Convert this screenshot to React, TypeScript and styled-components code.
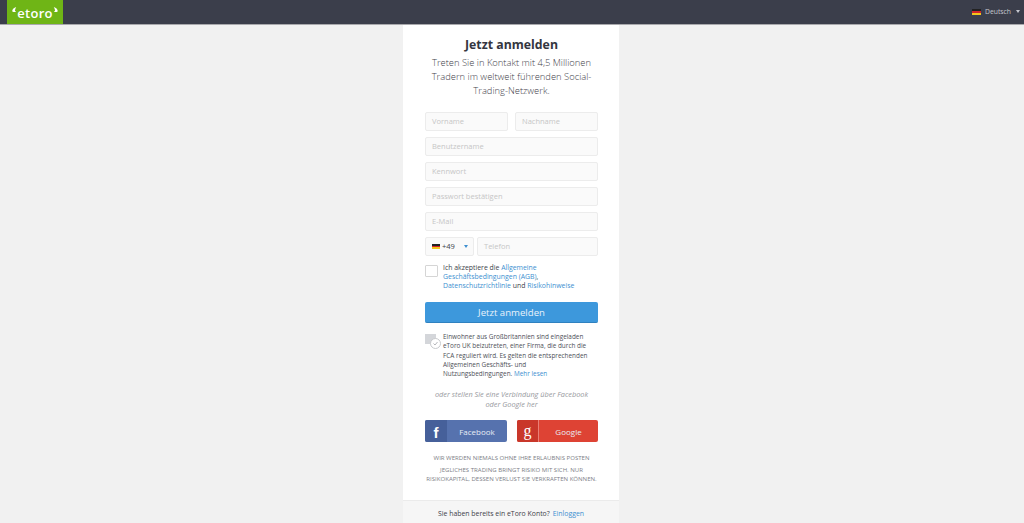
import React from 'react';
import styled, { createGlobalStyle } from 'styled-components';

const GlobalStyle = createGlobalStyle`
  html, body {
    margin: 0;
    padding: 0;
    height: 523px;
    overflow: hidden;
    background: #f1f1f1;
    font-family: "Open Sans", "Liberation Sans", sans-serif;
  }
  * { box-sizing: border-box; }
`;

const Header = styled.header`
  height: 25px;
  background: #3b3e4b;
  border-bottom: 1px solid #a9a9ad;
  display: flex;
  justify-content: space-between;
  align-items: stretch;
  padding: 0 4px 0 7px;
`;

const Logo = styled.div`
  width: 56px;
  background: #6fb516;
  display: flex;
  align-items: flex-start;
  justify-content: center;
  padding-top: 6px;
  color: #fff;
`;

const LogoWord = styled.span`
  font-size: 13px;
  font-weight: 600;
  line-height: 14px;
  letter-spacing: 0.3px;
  text-transform: lowercase;
`;

const Lang = styled.div`
  display: flex;
  align-items: center;
  gap: 4px;
  color: #c5c7cf;
  font-size: 6.8px;
  padding-bottom: 1px;
`;

const Flag = styled.span<{ $w: number }>`
  display: inline-block;
  width: ${({ $w }) => $w}px;
  height: ${({ $w }) => Math.round($w * 0.62)}px;
  background: linear-gradient(#222 0 33%, #d3252a 33% 66%, #f2c51c 66%);
`;

const Caret = styled.span<{ $gap: number; $color: string }>`
  width: 0;
  height: 0;
  margin-left: ${({ $gap }) => $gap}px;
  border-left: 2.5px solid transparent;
  border-right: 2.5px solid transparent;
  border-top: 3px solid ${({ $color }) => $color};
`;

const Page = styled.div`
  display: flex;
  justify-content: center;
  padding-right: 2px;
`;

const Card = styled.main`
  width: 216px;
  height: 498px;
  background: #fff;
  display: flex;
  flex-direction: column;
  overflow: hidden;
`;

const Body = styled.div`
  flex: 1;
  padding: 9px 21px 0 22px;
  display: flex;
  flex-direction: column;
`;

const Title = styled.h1`
  margin: 0 -10px;
  font-size: 12.3px;
  line-height: 21px;
  font-weight: 700;
  color: #34363f;
  text-align: center;
`;

const Lead = styled.p`
  margin: 1px -6px 0;
  font-size: 9.4px;
  line-height: 14px;
  font-weight: 300;
  color: #3f424b;
  text-align: center;
`;

const Fields = styled.div`
  margin-top: 14px;
  display: flex;
  flex-direction: column;
  gap: 6px;
`;

const Row = styled.div<{ $gap: number }>`
  display: flex;
  gap: ${({ $gap }) => $gap}px;
`;

const Field = styled.div`
  flex: 1 0 19px;
  min-height: 19px;
  background: #fafafa;
  border: 1px solid #ececec;
  border-radius: 2px;
  padding: 0 6px 1px;
  display: flex;
  align-items: center;
  font-size: 7.5px;
  color: #c6c6c6;
`;

const DialCode = styled.div`
  width: 49px;
  flex: none;
  height: 19px;
  background: #fafafa;
  border: 1px solid #ececec;
  border-radius: 2px;
  padding: 0 5px 1px 6px;
  display: flex;
  align-items: center;
  gap: 2px;
  font-size: 7.5px;
  color: #40424b;
`;

const Terms = styled.div`
  margin-top: 7px;
  display: flex;
  gap: 5px;
  font-size: 6.9px;
  line-height: 9px;
  color: #40424b;
`;

const Check = styled.span`
  flex: none;
  width: 13px;
  height: 12px;
  margin-top: 2px;
  background: #fff;
  border: 1px solid #d5d5d5;
  border-radius: 1px;
`;

const Link = styled.a`
  color: #3c8fd0;
`;

const Submit = styled.button`
  margin-top: 12px;
  height: 21px;
  width: 100%;
  flex: none;
  border: 0;
  border-bottom: 1px solid #2f81bf;
  border-radius: 2px;
  background: #3d98dc;
  color: #e9f3fb;
  font: 400 9.6px "Open Sans", sans-serif;
  padding: 0;
`;

const Notice = styled.div`
  margin-top: 9px;
  padding-right: 5px;
  display: flex;
  gap: 2px;
  font-size: 6.4px;
  line-height: 9.3px;
  color: #4d4f57;
`;

const NoticeIcon = styled.svg`
  flex: none;
  width: 16px;
  height: 16px;
  margin-top: 2px;
`;

const Alt = styled.p`
  margin: 11px 0 0;
  font-size: 7.35px;
  line-height: 10px;
  font-style: italic;
  color: #97999e;
  text-align: center;
`;

const Socials = styled.div`
  margin-top: 11px;
  display: flex;
  justify-content: space-between;
`;

const Social = styled.div<{ $bg: string; $w: number }>`
  width: ${({ $w }) => $w}px;
  height: 22px;
  border-radius: 2px;
  background: ${({ $bg }) => $bg};
  color: #e8edf5;
  font-size: 8px;
  display: flex;
  align-items: center;
  overflow: hidden;

  & > span {
    flex: 1;
    text-align: center;
  }
`;

const FacebookMark = styled.b`
  width: 22px;
  align-self: stretch;
  background: #46609a;
  color: #fff;
  font: 700 15px "Liberation Sans", sans-serif;
  display: flex;
  align-items: center;
  justify-content: center;
  padding-top: 2px;
`;

const GoogleMark = styled.b`
  width: 22px;
  align-self: stretch;
  background: #c9372a;
  border-right: 1px solid #ea8076;
  color: #fff;
  font: 400 16px "Liberation Serif", serif;
  display: flex;
  align-items: center;
  justify-content: center;
`;

const Legal = styled.p<{ $top: number }>`
  margin: ${({ $top }) => $top}px -2px 0;
  font-size: 6.05px;
  line-height: 9px;
  color: #7e8087;
  text-align: center;
  text-transform: uppercase;
`;

const Foot = styled.footer`
  height: 23px;
  flex: none;
  padding-top: 3px;
  background: #f6f6f6;
  border-top: 1px solid #ebebeb;
  font-size: 6.9px;
  color: #3e4048;
  display: flex;
  align-items: center;
  justify-content: center;
  gap: 3px;
`;

export default function App() {
  return (
    <>
      <GlobalStyle />
      <Header>
        <Logo>
          <svg width="6" height="10" viewBox="0 0 5 9"><path d="M4.500 1C1.500 2 .8 4 1 5c.8.4 2.200.7 3.500.3-.8-.5-1.400-1-1-2 .2-.8.6-1.500 1-2.300z" fill="#fff" /></svg>
          <LogoWord>eToro</LogoWord>
          <svg width="6" height="10" viewBox="0 0 5 9"><path d="M.5 1c3 1 3.700 3 3.500 4-.8.4-2.200.7-3.500.3.8-.5 1.400-1 1-2C1.300 2.500.9 1.800.5 1z" fill="#fff" /></svg>
        </Logo>
        <Lang>
          <Flag $w={9} />
          <span>Deutsch</span>
          <Caret $gap={1} $color="#c5c7cf" />
        </Lang>
      </Header>
      <Page>
        <Card>
          <Body>
            <Title>Jetzt anmelden</Title>
            <Lead>Treten Sie in Kontakt mit 4,5 Millionen Tradern im weltweit führenden Social-Trading-Netzwerk.</Lead>
            <Fields>
              <Row $gap={7}>
                <Field>Vorname</Field>
                <Field>Nachname</Field>
              </Row>
              <Field>Benutzername</Field>
              <Field>Kennwort</Field>
              <Field>Passwort bestätigen</Field>
              <Field>E-Mail</Field>
              <Row $gap={3}>
                <DialCode>
                  <Flag $w={8} />
                  <span>+49</span>
                  <Caret $gap={7} $color="#3d8fd0" />
                </DialCode>
                <Field>Telefon</Field>
              </Row>
            </Fields>
            <Terms>
              <Check />
              <span>
                Ich akzeptiere die <Link>Allgemeine Geschäftsbedingungen (AGB)</Link>, <Link>Datenschutzrichtlinie</Link> und <Link>Risikohinweise</Link>
              </span>
            </Terms>
            <Submit>Jetzt anmelden</Submit>
            <Notice>
              <NoticeIcon viewBox="0 0 16 16">
                <rect x="0" y="0" width="11" height="10" fill="#d4d6da" />
                <circle cx="10.500" cy="9.500" r="5" fill="#fff" stroke="#c8cacd" />
                <path d="M8.500 9.500l1.500 1.500 2.500-3" fill="none" stroke="#b5b7bb" />
              </NoticeIcon>
              <span>
                Einwohner aus Großbritannien sind eingeladen eToro UK beizutreten, einer Firma, die durch die FCA reguliert wird. Es gelten die entsprechenden Allgemeinen Geschäfts- und Nutzungsbedingungen. <Link>Mehr lesen</Link>
              </span>
            </Notice>
            <Alt>oder stellen Sie eine Verbindung über Facebook<br />oder Google her</Alt>
            <Socials>
              <Social $bg="#5672ae" $w={82}>
                <FacebookMark>f</FacebookMark>
                <span>Facebook</span>
              </Social>
              <Social $bg="#de4334" $w={81}>
                <GoogleMark>g</GoogleMark>
                <span>Google</span>
              </Social>
            </Socials>
            <Legal $top={12}>Wir werden niemals ohne Ihre Erlaubnis posten</Legal>
            <Legal $top={3}>Jegliches Trading bringt Risiko mit sich. Nur Risikokapital, dessen Verlust Sie verkraften können.</Legal>
          </Body>
          <Foot>
            <span>Sie haben bereits ein eToro Konto?</span>
            <Link>Einloggen</Link>
          </Foot>
        </Card>
      </Page>
    </>
  );
}
